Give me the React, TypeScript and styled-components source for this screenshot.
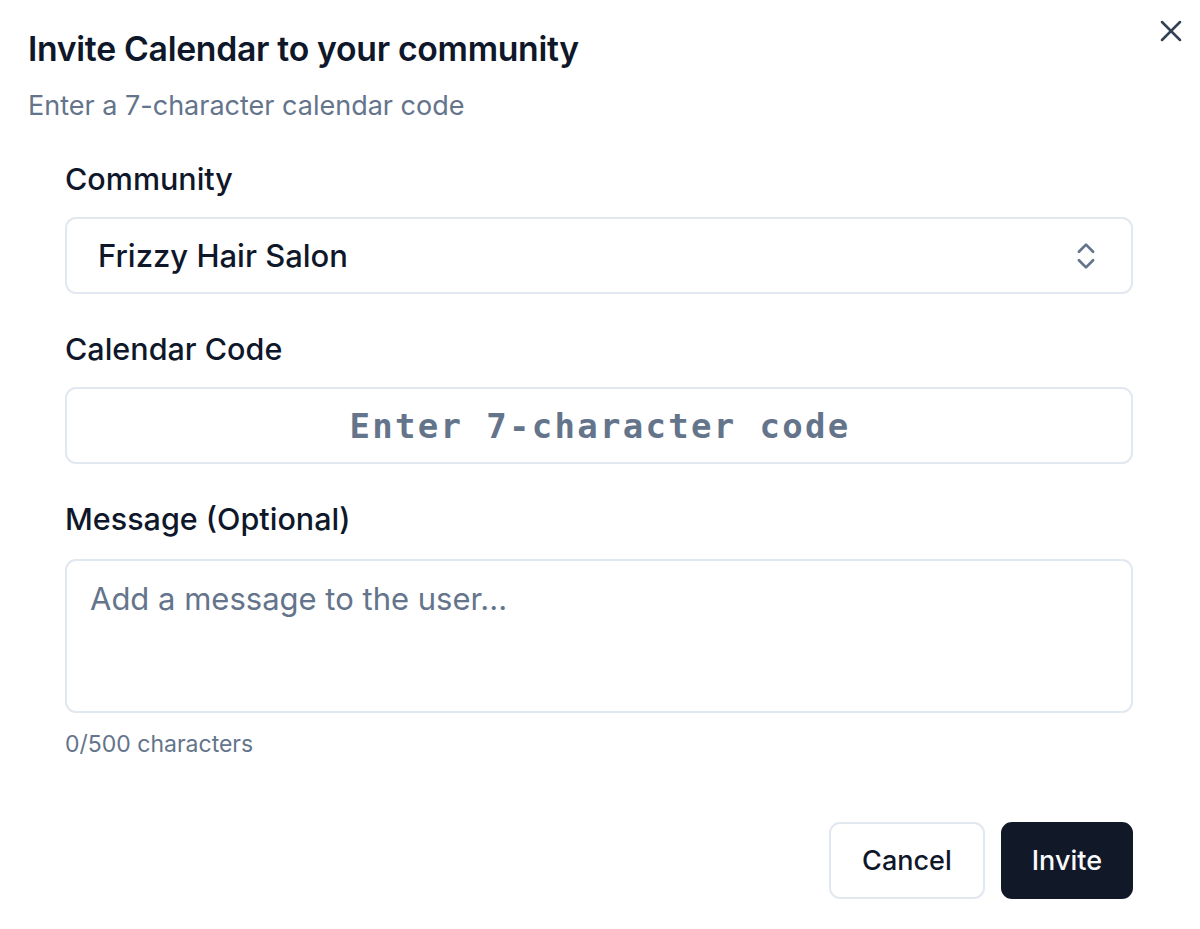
import React from "react";
import styled, { createGlobalStyle } from "styled-components";
import { X, ChevronsUpDown } from "lucide-react";

const GlobalStyle = createGlobalStyle`
  html, body { margin: 0; padding: 0; background: #ffffff; }
  body { font-family: Inter, "Noto Sans", sans-serif; color: #0f172a; }
  * { box-sizing: border-box; }
`;

const Dialog = styled.div`
  position: relative;
  width: 1200px;
  height: 929px;
  background: #ffffff;
  padding: 28px 67px 0 28px;
  display: flex;
  flex-direction: column;
`;

const CloseButton = styled.button`
  position: absolute;
  top: 13px;
  right: 11px;
  width: 36px;
  height: 36px;
  padding: 0;
  border: none;
  background: transparent;
  color: #334155;
  display: flex;
  align-items: center;
  justify-content: center;
  cursor: pointer;
`;

const Header = styled.div`
  display: flex;
  flex-direction: column;
  gap: 18px;
`;

const Title = styled.h2`
  margin: 0;
  font-size: 33.75px;
  line-height: 42px;
  font-weight: 600;
  letter-spacing: -0.3px;
  color: #0f172a;
`;

const Description = styled.p`
  margin: 0;
  font-size: 27px;
  line-height: 36px;
  color: #64748b;
`;

const Form = styled.div`
  display: flex;
  flex-direction: column;
  padding-left: 37px;
  margin-top: 37px;
`;

const Field = styled.div<{ $mt?: number; $gap?: number }>`
  display: flex;
  flex-direction: column;
  gap: ${(p) => p.$gap ?? 20}px;
  margin-top: ${(p) => p.$mt ?? 0}px;
`;

const Label = styled.label`
  font-size: 30.5px;
  line-height: 36px;
  font-weight: 500;
  color: #0f172a;
`;

const Box = styled.div<{ $h: number }>`
  height: ${(p) => p.$h}px;
  border: 2px solid #e2e8f0;
  border-radius: 11px;
  background: #ffffff;
`;

const SelectBox = styled(Box)`
  display: flex;
  align-items: center;
  justify-content: space-between;
  padding: 0 28px 0 31px;
  font-size: 31px;
  font-weight: 500;
  color: #0f172a;
`;

const ChevronIcon = styled(ChevronsUpDown)`
  color: #64748b;
`;

const CodeBox = styled(Box)`
  display: flex;
  align-items: center;
  justify-content: center;
  padding-left: 2px;
  font-family: "DejaVu Sans Mono", "Liberation Mono", monospace;
  font-weight: 700;
  font-size: 34px;
  letter-spacing: 2.3px;
  color: #64748b;
`;

const MessageBox = styled(Box)`
  padding: 18px 23px;
  font-size: 31px;
  line-height: 40px;
  color: #64748b;
`;

const Hint = styled.div`
  margin-top: 17px;
  font-size: 23px;
  line-height: 28px;
  color: #64748b;
`;

const Footer = styled.div`
  display: flex;
  justify-content: flex-end;
  gap: 16px;
  margin-top: 64px;
`;

const Button = styled.button<{ $primary?: boolean }>`
  height: 77px;
  padding: 0 ${(p) => (p.$primary ? 29 : 31)}px;
  border-radius: 11px;
  font-family: Inter, "Noto Sans", sans-serif;
  font-size: 27px;
  font-weight: 500;
  cursor: pointer;
  border: 2px solid ${(p) => (p.$primary ? "#111827" : "#e2e8f0")};
  background: ${(p) => (p.$primary ? "#111827" : "#ffffff")};
  color: ${(p) => (p.$primary ? "#f8fafc" : "#0f172a")};
`;

export default function App() {
  return (
    <>
      <GlobalStyle />
      <Dialog>
        <CloseButton aria-label="Close">
          <X size={36} strokeWidth={1.7} />
        </CloseButton>
        <Header>
          <Title>Invite Calendar to your community</Title>
          <Description>Enter a 7-character calendar code</Description>
        </Header>
        <Form>
          <Field>
            <Label>Community</Label>
            <SelectBox $h={77}>
              <span>Frizzy Hair Salon</span>
              <ChevronIcon size={34} strokeWidth={1.9} />
            </SelectBox>
          </Field>
          <Field $mt={37}>
            <Label>Calendar Code</Label>
            <CodeBox $h={77}>Enter 7-character code</CodeBox>
          </Field>
          <Field $mt={37} $gap={22}>
            <Label>Message (Optional)</Label>
            <MessageBox $h={154}>Add a message to the user...</MessageBox>
          </Field>
          <Hint>0/500 characters</Hint>
          <Footer>
            <Button>Cancel</Button>
            <Button $primary>Invite</Button>
          </Footer>
        </Form>
      </Dialog>
    </>
  );
}
